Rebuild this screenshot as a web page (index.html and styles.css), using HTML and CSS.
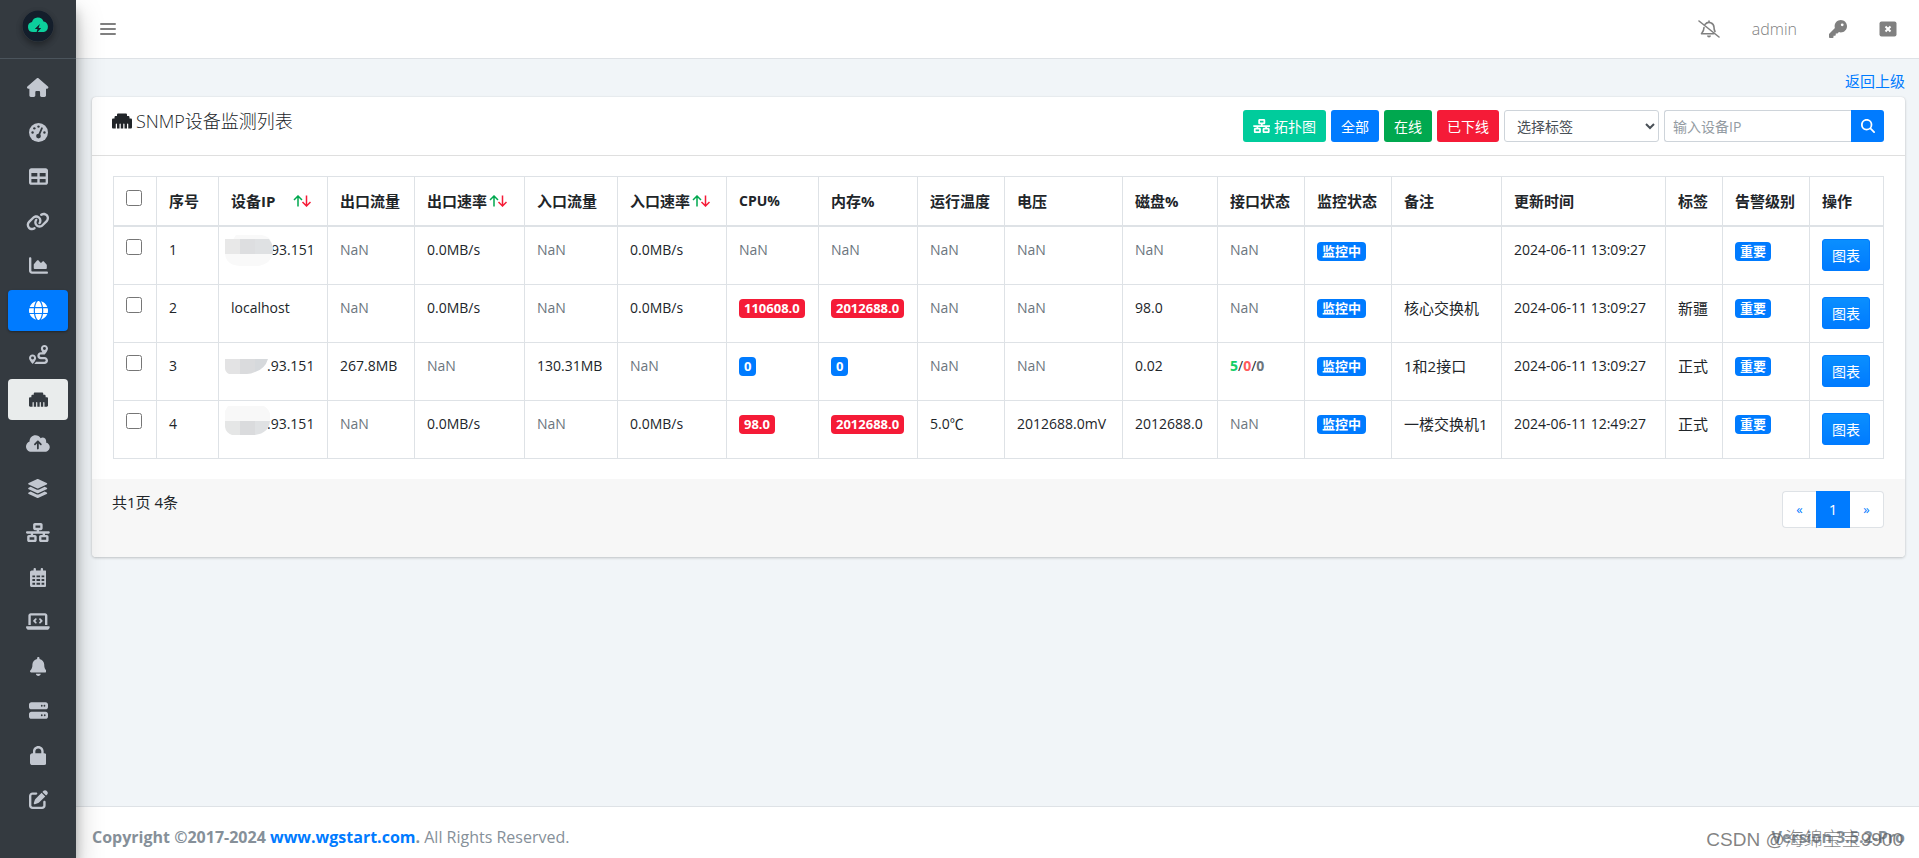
FILE: index.html
```html
<!DOCTYPE html>
<html lang="zh-CN">
<head>
<meta charset="utf-8">
<meta name="viewport" content="width=device-width, initial-scale=1">
<title>SNMP设备监测列表</title>
<link rel="stylesheet" href="styles.css">
</head>
<body class="layout">
<aside class="sidebar">
  <a class="brand" href="#" aria-label="首页">
    <svg viewBox="0 0 32 32" class="brand-logo"><circle cx="16" cy="16" r="15.500" fill="#141e2b"/><path fill="#0ccf9c" d="M11 22a5 5 0 0 1-1-9.900 6 6 0 0 1 11.500-.6 5.400 5.400 0 0 1 .5 10.500z"/><path fill="#141e2b" d="M17.800 14l-5 5h2.700l-1.300 4.500 5-5.500h-2.600z"/></svg>
  </a>
  <nav aria-label="主菜单">
    <ul class="menu">
      <li><a href="#" aria-label="主页"><svg viewBox="0 0 576 512"><path d="M575.800 255.500c0 18-15 32.100-32 32.100h-32l.7 160.200c0 2.700-.2 5.400-.5 8.100V472c0 22.100-17.900 40-40 40H392c-22.100 0-40-17.900-40-40v-88c0-17.700-14.300-32-32-32h-64c-17.700 0-32 14.300-32 32v88c0 22.100-17.900 40-40 40h-80c-22.100 0-40-17.900-40-40V287.600H32c-18 0-32-14-32-32.100 0-9 3-17 10-24L266.400 8c7-7 15-8 22-8s15 2 21 7l255.400 224.500c8 7 12 15 11 24z"/></svg></a></li>
      <li><a href="#" aria-label="仪表盘"><svg viewBox="0 0 512 512"><circle cx="256" cy="256" r="256"/><g class="cut"><circle cx="256" cy="96" r="32"/><circle cx="144" cy="144" r="32"/><circle cx="96" cy="256" r="32"/><circle cx="416" cy="256" r="32"/><circle cx="256" cy="352" r="64"/><path d="M234 345l93-214c5-13 19-18 31-13s18 19 13 31l-93 213z"/></g></svg></a></li>
      <li><a href="#" aria-label="表格"><svg viewBox="0 0 512 512"><path d="M64 256V160H224v96H64zm0 64H224v96H64V320zm224 96V320H448v96H288zM448 256H288V160H448v96zM64 32C28.700 32 0 60.700 0 96V416c0 35.300 28.700 64 64 64H448c35.300 0 64-28.700 64-64V96c0-35.300-28.700-64-64-64H64z"/></svg></a></li>
      <li><a href="#" aria-label="链接"><svg viewBox="0 0 640 512"><path d="M579.800 267.700c56.500-56.500 56.500-148 0-204.500c-50-50-128.800-56.500-186.300-15.400l-1.600 1.100c-14.400 10.300-17.700 30.300-7.400 44.600s30.300 17.700 44.600 7.400l1.600-1.100c32.100-22.900 76-19.300 103.800 8.600c31.500 31.500 31.500 82.500 0 114L422.300 334.800c-31.500 31.500-82.500 31.500-114 0c-27.900-27.900-31.500-71.800-8.600-103.800l1.100-1.600c10.300-14.400 6.900-34.400-7.400-44.600s-34.400-6.900-44.600 7.400l-1.100 1.600C206.500 251.200 213 330 263 380c56.500 56.500 148 56.500 204.500 0L579.800 267.700zM60.200 244.300c-56.500 56.500-56.500 148 0 204.500c50 50 128.800 56.500 186.300 15.400l1.600-1.100c14.400-10.300 17.700-30.300 7.400-44.600s-30.300-17.700-44.600-7.400l-1.600 1.100c-32.100 22.900-76 19.300-103.800-8.600C74 372 74 321 105.500 289.500L217.700 177.200c31.500-31.500 82.500-31.500 114 0c27.900 27.900 31.500 71.800 8.600 103.900l-1.100 1.600c-10.300 14.400-6.900 34.400 7.400 44.600s34.400 6.900 44.600-7.400l1.100-1.600C433.500 260.800 427 182 377 132c-56.500-56.500-148-56.500-204.500 0L60.200 244.300z"/></svg></a></li>
      <li><a href="#" aria-label="图表"><svg viewBox="0 0 512 512"><path d="M64 64c0-17.700-14.300-32-32-32S0 46.300 0 64V400c0 44.200 35.800 80 80 80H480c17.700 0 32-14.300 32-32s-14.300-32-32-32H80c-8.800 0-16-7.200-16-16V64zm96 288H448c17.700 0 32-14.300 32-32V251.800c0-7.600-2.700-15-7.700-20.800l-65.800-76.800c-12.100-14.200-33.700-15-46.900-1.800l-21 21c-10 10-26.400 9.200-35.400-1.600l-39.200-47c-12.600-15.100-35.700-15.400-48.700-.6L135.900 215c-5.100 5.800-7.900 13.300-7.900 21.100v84c0 17.700 14.300 32 32 32z"/></svg></a></li>
      <li><a href="#" class="open" aria-label="网络"><svg viewBox="0 0 512 512"><path d="M352 256c0 22.200-1.200 43.600-3.300 64H163.300c-2.200-20.400-3.300-41.800-3.300-64s1.200-43.600 3.300-64H348.700c2.200 20.400 3.300 41.800 3.300 64zm28.800-64H503.900c5.300 20.500 8.100 41.900 8.100 64s-2.800 43.500-8.100 64H380.800c2.100-20.600 3.200-42 3.200-64s-1.100-43.400-3.200-64zm112.600-32H376.700c-10-63.900-29.800-117.400-55.300-151.600c78.300 20.700 142 77.500 171.900 151.600zm-149.100 0H167.700c6.100-36.400 15.500-68.600 27-94.700c10.500-23.600 22.200-40.700 33.500-51.500C239.400 3.200 248.700 0 256 0s16.600 3.200 27.800 13.800c11.300 10.800 23 27.900 33.500 51.500c11.600 26 20.900 58.200 27 94.700zm-209 0H18.600C48.600 85.900 112.200 29.100 190.600 8.400C165.100 42.600 145.300 96.100 135.300 160zM8.100 192H131.200c-2.100 20.600-3.200 42-3.200 64s1.100 43.400 3.200 64H8.100C2.800 299.500 0 278.100 0 256s2.800-43.500 8.100-64zM194.700 446.600c-11.600-26-20.900-58.200-27-94.600H344.300c-6.100 36.400-15.500 68.600-27 94.600c-10.500 23.600-22.200 40.700-33.500 51.500C272.600 508.800 263.300 512 256 512s-16.600-3.200-27.800-13.800c-11.300-10.800-23-27.900-33.500-51.500zM135.300 352c10 63.900 29.800 117.400 55.300 151.600C112.200 482.900 48.600 426.100 18.600 352H135.300zm358.100 0c-30 74.100-93.600 130.900-171.900 151.600c25.500-34.200 45.200-87.700 55.300-151.600H493.400z"/></svg></a></li>
      <li><a href="#" aria-label="路由"><svg viewBox="0 0 512 512"><path fill-rule="evenodd" d="M512 96c0 50.200-59.100 125.100-84.600 155c-3.800 4.400-9.400 6.100-14.500 5H320c-17.700 0-32 14.300-32 32s14.300 32 32 32h96c53 0 96 43 96 96s-43 96-96 96H139.600c8.700-9.900 19.300-22.600 30-36.800c6.300-8.400 12.800-17.600 19-27.200H416c17.700 0 32-14.300 32-32s-14.300-32-32-32H320c-53 0-96-43-96-96s43-96 96-96h39.800c-21-31.500-39.800-67.700-39.800-96c0-53 43-96 96-96s96 43 96 96zM117.100 489.100c-3.800 4.300-7.200 8.100-10.100 11.300l-1.800 2-.2-.2c-6 4.600-14.600 4-20-1.800C59.800 473 0 402.500 0 352c0-53 43-96 96-96s96 43 96 96c0 30-21.100 67-43.500 97.900c-10.700 14.700-21.700 28-30.800 38.500l-.6 .7zM136 352a40 40 0 1 0 -80 0 40 40 0 1 0 80 0zM416 136a40 40 0 1 0 0-80 40 40 0 1 0 0 80z"/></svg></a></li>
      <li><a href="#" class="current" aria-label="SNMP设备监测" aria-current="page"><svg viewBox="0 0 512 512"><path d="M0 224V416c0 17.700 14.300 32 32 32H96V336c0-8.800 7.200-16 16-16s16 7.200 16 16V448h64V336c0-8.800 7.200-16 16-16s16 7.200 16 16V448h64V336c0-8.800 7.200-16 16-16s16 7.200 16 16V448h64V336c0-8.800 7.200-16 16-16s16 7.200 16 16V448h64c17.700 0 32-14.300 32-32V224c0-17.700-14.300-32-32-32H448V160c0-17.700-14.300-32-32-32H384V96c0-17.700-14.300-32-32-32H160c-17.700 0-32 14.300-32 32v32H96c-17.700 0-32 14.300-32 32v32H32c-17.700 0-32 14.300-32 32z"/></svg></a></li>
      <li><a href="#" aria-label="上传"><svg viewBox="0 0 640 512"><path d="M144 480C64.500 480 0 415.500 0 336c0-62.800 40.200-116.200 96.200-135.900c-.1-2.700-.2-5.400-.2-8.100c0-88.400 71.600-160 160-160c59.300 0 111 32.200 138.700 80.200C409.900 102 428.300 96 448 96c53 0 96 43 96 96c0 12.200-2.300 23.800-6.400 34.600C596 238.400 640 290.100 640 352c0 70.700-57.300 128-128 128H144zm79-217c-9.400 9.400-9.400 24.600 0 33.900s24.600 9.400 33.900 0l39-39V392c0 13.300 10.700 24 24 24s24-10.700 24-24V257.900l39 39c9.400 9.400 24.600 9.400 33.900 0s9.400-24.600 0-33.900l-80-80c-9.400-9.400-24.600-9.400-33.900 0l-80 80z"/></svg></a></li>
      <li><a href="#" aria-label="分组"><svg viewBox="0 0 576 512"><path d="M264.500 5.200c14.900-6.900 32.100-6.900 47 0l218.600 101c8.500 3.900 13.900 12.400 13.900 21.800s-5.400 17.900-13.900 21.800l-218.600 101c-14.900 6.900-32.100 6.900-47 0L45.900 149.800C37.400 145.800 32 137.300 32 128s5.400-17.900 13.900-21.800L264.500 5.200zM476.900 209.600l53.200 24.600c8.500 3.900 13.900 12.400 13.900 21.800s-5.400 17.900-13.900 21.800l-218.600 101c-14.900 6.900-32.100 6.900-47 0L45.900 277.800C37.400 273.800 32 265.300 32 256s5.400-17.900 13.900-21.800l53.200-24.600 152 70.200c23.400 10.800 50.400 10.800 73.800 0l152-70.200zm-152 198.200l152-70.200 53.200 24.600c8.500 3.900 13.900 12.400 13.900 21.800s-5.400 17.900-13.900 21.800l-218.600 101c-14.900 6.900-32.100 6.900-47 0L45.900 405.800C37.400 401.800 32 393.300 32 384s5.400-17.900 13.900-21.800l53.200-24.600 152 70.200c23.400 10.800 50.400 10.800 73.800 0z"/></svg></a></li>
      <li><a href="#" aria-label="拓扑"><svg viewBox="0 0 640 512"><path d="M256 64H384v64H256V64zM240 0c-26.500 0-48 21.500-48 48v96c0 26.500 21.500 48 48 48h48v32H32c-17.700 0-32 14.300-32 32s14.300 32 32 32h96v32H80c-26.500 0-48 21.500-48 48v96c0 26.500 21.500 48 48 48H240c26.500 0 48-21.500 48-48V368c0-26.500-21.500-48-48-48H192V288H448v32H400c-26.500 0-48 21.500-48 48v96c0 26.500 21.500 48 48 48H560c26.500 0 48-21.500 48-48V368c0-26.500-21.500-48-48-48H512V288h96c17.700 0 32-14.300 32-32s-14.300-32-32-32H352V192h48c26.500 0 48-21.500 48-48V48c0-26.500-21.500-48-48-48H240zM96 448V384H224v64H96zm320-64H544v64H416V384z"/></svg></a></li>
      <li><a href="#" aria-label="日历"><svg viewBox="0 0 448 512"><path fill-rule="evenodd" d="M128 0c18 0 32 14 32 32v32h128V32c0-18 14-32 32-32s32 14 32 32v32h48c27 0 48 21 48 48v352c0 27-21 48-48 48H48c-27 0-48-21-48-48V112c0-27 21-48 48-48h48V32c0-18 14-32 32-32zM64 200v48h72v-48zm112 0v48h96v-48zm136 0v48h72v-48zM64 296v56h72v-56zm112 0v56h96v-56zm136 0v56h72v-56zM64 400v48h72v-48zm112 0v48h96v-48zm136 0v48h72v-48z"/></svg></a></li>
      <li><a href="#" aria-label="终端"><svg viewBox="0 0 640 512"><path d="M64 96c0-35.300 28.700-64 64-64H512c35.300 0 64 28.700 64 64V352H512V96H128V352H64V96zM0 403.200C0 392.600 8.600 384 19.200 384H620.800c10.600 0 19.200 8.600 19.200 19.200c0 42.400-34.400 76.800-76.800 76.800H76.800C34.400 480 0 445.600 0 403.200zM281 209l-31 31 31 31c9.400 9.400 9.400 24.600 0 33.900s-24.600 9.400-33.900 0l-48-48c-9.400-9.400-9.400-24.600 0-33.900l48-48c9.400-9.400 24.600-9.400 33.900 0s9.400 24.600 0 33.900zM393 175l48 48c9.400 9.400 9.400 24.600 0 33.900l-48 48c-9.400 9.400-24.600 9.400-33.900 0s-9.400-24.600 0-33.900l31-31-31-31c-9.400-9.400-9.400-24.600 0-33.900s24.600-9.400 33.900 0z"/></svg></a></li>
      <li><a href="#" aria-label="告警"><svg viewBox="0 0 448 512"><path d="M224 0c-17.700 0-32 14.300-32 32V51.200C119 66 64 130.600 64 208v18.800c0 47-17.300 92.400-48.500 127.600l-7.400 8.300c-8.400 9.400-10.400 22.900-5.300 34.400S19.400 416 32 416H416c12.600 0 24-7.400 29.200-18.900s3.100-25-5.300-34.400l-7.400-8.300C401.300 319.200 384 273.900 384 226.800V208c0-77.400-55-142-128-156.800V32c0-17.700-14.300-32-32-32zm45.300 493.300c12-12 18.700-28.300 18.700-45.300H160c0 17 6.700 33.300 18.700 45.300s28.300 18.700 45.300 18.700s33.300-6.700 45.300-18.700z"/></svg></a></li>
      <li><a href="#" aria-label="主机"><svg viewBox="0 0 512 512"><path d="M64 32C28.700 32 0 60.700 0 96v64c0 35.300 28.700 64 64 64H448c35.300 0 64-28.700 64-64V96c0-35.300-28.700-64-64-64H64zm280 72a24 24 0 1 1 0 48 24 24 0 1 1 0-48zm48 24a24 24 0 1 1 48 0 24 24 0 1 1 -48 0zM64 288c-35.300 0-64 28.700-64 64v64c0 35.300 28.700 64 64 64H448c35.300 0 64-28.700 64-64V352c0-35.300-28.700-64-64-64H64zm280 72a24 24 0 1 1 0 48 24 24 0 1 1 0-48zm56 24a24 24 0 1 1 48 0 24 24 0 1 1 -48 0z"/></svg></a></li>
      <li><a href="#" aria-label="安全"><svg viewBox="0 0 448 512"><path d="M144 144v48H304V144c0-44.200-35.800-80-80-80s-80 35.800-80 80zM80 192V144C80 64.500 144.500 0 224 0s144 64.500 144 144v48h16c35.300 0 64 28.700 64 64V448c0 35.300-28.700 64-64 64H64c-35.300 0-64-28.700-64-64V256c0-35.300 28.700-64 64-64H80z"/></svg></a></li>
      <li><a href="#" aria-label="编辑"><svg viewBox="0 0 512 512"><path d="M471.600 21.700c-21.900-21.900-57.300-21.900-79.200 0L362.300 51.700l97.900 97.900 30.100-30.100c21.900-21.900 21.900-57.300 0-79.200L471.600 21.700zm-299.200 220c-6.100 6.100-10.800 13.600-13.500 21.900l-29.600 88.800c-2.900 8.600-.6 18.100 5.800 24.600s15.900 8.700 24.600 5.800l88.800-29.600c8.200-2.700 15.700-7.400 21.900-13.500L437.700 172.300 339.700 74.300 172.400 241.700zM96 64C43 64 0 107 0 160V416c0 53 43 96 96 96H352c53 0 96-43 96-96V320c0-17.700-14.300-32-32-32s-32 14.300-32 32v96c0 17.700-14.300 32-32 32H96c-17.700 0-32-14.300-32-32V160c0-17.700 14.300-32 32-32h96c17.700 0 32-14.300 32-32s-14.300-32-32-32H96z"/></svg></a></li>
    </ul>
  </nav>
</aside>

<div class="page">
  <header class="topbar">
    <button class="icon-btn" type="button" aria-label="折叠菜单"><svg class="bars" viewBox="0 0 16 14"><path d="M1 2h14M1 7h14M1 12h14" fill="none" stroke="currentColor" stroke-width="2" stroke-linecap="round"/></svg></button>
    <div class="topbar-tools">
      <button class="icon-btn" type="button" aria-label="关闭告警声音"><svg class="tool-wide" viewBox="0 0 22 18"><g fill="none" stroke="currentColor" stroke-width="1.600" stroke-linecap="round" stroke-linejoin="round"><path d="M1 1l20 16M11 1v1.500M7.200 4.200A5 5 0 0 1 16 7.300c0 2 .4 3.200 1 4.200M6 7.500c0 3-1 4.500-2.500 6.200h12"/></g><path fill="currentColor" d="M9 15.500h4a2 2 0 0 1-4 0z"/></svg></button>
      <a class="user" href="#">admin</a>
      <button class="icon-btn" type="button" aria-label="修改密码"><svg class="tool" viewBox="0 0 512 512"><path fill="currentColor" d="M336 352c97.200 0 176-78.800 176-176S433.200 0 336 0S160 78.800 160 176c0 18.700 2.900 36.800 8.300 53.700L7 391c-4.500 4.500-7 10.600-7 17v80c0 13.300 10.700 24 24 24h80c13.300 0 24-10.700 24-24V448h40c13.300 0 24-10.700 24-24V384h40c6.400 0 12.500-2.500 17-7l33.300-33.300c16.900 5.400 35 8.300 53.700 8.300zM376 96a40 40 0 1 1 0 80 40 40 0 1 1 0-80z"/></svg></button>
      <button class="icon-btn" type="button" aria-label="退出"><svg class="tool" viewBox="0 0 18 18"><rect x="0.500" y="1.500" width="17" height="15" rx="2" fill="currentColor"/><path d="M6.500 6.500l5 5M11.500 6.500l-5 5" stroke="#fff" stroke-width="2"/></svg></button>
    </div>
  </header>

  <main class="content">
    <a class="back" href="#">返回上级</a>
    <section class="card">
      <div class="card-header">
        <h1 class="card-title"><svg viewBox="0 0 512 512"><path d="M0 224V416c0 17.700 14.300 32 32 32H96V336c0-8.800 7.200-16 16-16s16 7.200 16 16V448h64V336c0-8.800 7.200-16 16-16s16 7.200 16 16V448h64V336c0-8.800 7.200-16 16-16s16 7.200 16 16V448h64V336c0-8.800 7.200-16 16-16s16 7.200 16 16V448h64c17.700 0 32-14.300 32-32V224c0-17.700-14.300-32-32-32H448V160c0-17.700-14.300-32-32-32H384V96c0-17.700-14.300-32-32-32H160c-17.700 0-32 14.300-32 32v32H96c-17.700 0-32 14.300-32 32v32H32c-17.700 0-32 14.300-32 32z"/></svg>SNMP设备监测列表</h1>
        <form class="filters">
          <button class="btn teal" type="button"><svg viewBox="0 0 640 512"><path d="M256 64H384v64H256V64zM240 0c-26.500 0-48 21.500-48 48v96c0 26.500 21.500 48 48 48h48v32H32c-17.700 0-32 14.300-32 32s14.300 32 32 32h96v32H80c-26.500 0-48 21.500-48 48v96c0 26.500 21.500 48 48 48H240c26.500 0 48-21.500 48-48V368c0-26.500-21.500-48-48-48H192V288H448v32H400c-26.500 0-48 21.500-48 48v96c0 26.500 21.500 48 48 48H560c26.500 0 48-21.500 48-48V368c0-26.500-21.500-48-48-48H512V288h96c17.700 0 32-14.300 32-32s-14.300-32-32-32H352V192h48c26.500 0 48-21.500 48-48V48c0-26.500-21.500-48-48-48H240zM96 448V384H224v64H96zm320-64H544v64H416V384z"/></svg>拓扑图</button>
          <button class="btn blue" type="button">全部</button>
          <button class="btn green" type="button">在线</button>
          <button class="btn red" type="button">已下线</button>
          <select class="tag-select" aria-label="选择标签"><option>选择标签</option></select>
          <div class="search">
            <input type="text" placeholder="输入设备IP" aria-label="输入设备IP">
            <button type="submit" aria-label="搜索"><svg viewBox="0 0 512 512"><path d="M416 208c0 45.900-14.900 88.300-40 122.700L502.600 457.400c12.500 12.500 12.500 32.800 0 45.300s-32.800 12.500-45.300 0L330.700 376c-34.400 25.200-76.800 40-122.700 40C93.100 416 0 322.900 0 208S93.100 0 208 0S416 93.100 416 208zM208 352a144 144 0 1 0 0-288 144 144 0 1 0 0 288z"/></svg></button>
          </div>
        </form>
      </div>
      <div class="card-body">
        <table class="devices">
          <colgroup><col class="w-check"><col class="w-no"><col class="w-ip"><col class="w-std"><col class="w-rate"><col class="w-in"><col class="w-ip"><col class="w-cpu"><col class="w-mem"><col class="w-std"><col class="w-volt"><col class="w-disk"><col class="w-std"><col class="w-std"><col class="w-rate"><col class="w-time"><col class="w-tag"><col class="w-std"><col class="w-act"></colgroup>
          <thead>
            <tr><th><input type="checkbox" aria-label="全选"></th><th>序号</th><th>设备IP<svg class="sort spaced" viewBox="0 0 18 12"><path class="up" d="M5 11.500V1M1 5l4-4 4 4"/><path class="down" d="M13.500.5V11M9.500 7l4 4 4-4"/></svg></th><th>出口流量</th><th>出口速率<svg class="sort" viewBox="0 0 18 12"><path class="up" d="M5 11.500V1M1 5l4-4 4 4"/><path class="down" d="M13.500.5V11M9.500 7l4 4 4-4"/></svg></th><th>入口流量</th><th>入口速率<svg class="sort" viewBox="0 0 18 12"><path class="up" d="M5 11.500V1M1 5l4-4 4 4"/><path class="down" d="M13.500.5V11M9.500 7l4 4 4-4"/></svg></th><th class="latin">CPU%</th><th>内存%</th><th>运行温度</th><th>电压</th><th>磁盘%</th><th>接口状态</th><th>监控状态</th><th>备注</th><th>更新时间</th><th>标签</th><th>告警级别</th><th>操作</th></tr>
          </thead>
          <tbody>
            <tr><td><input type="checkbox" aria-label="选择 1"></td><td>1</td><td><span class="masked"><svg viewBox="0 0 50 34"><path fill="#f9f9f9" d="M12 1h26q11 2 11 15t-14 16H16Q1 31 1 18z"/><path fill="#e8e8e8" d="M1 5h15v15H1z"/><path fill="#dddee0" d="M16 5h15v15H16z"/><path fill="#dfe1e3" d="M31 5h14q5 7 4 15H31z"/></svg></span>93.151</td><td class="nan">NaN</td><td>0.0MB/s</td><td class="nan">NaN</td><td>0.0MB/s</td><td class="nan">NaN</td><td class="nan">NaN</td><td class="nan">NaN</td><td class="nan">NaN</td><td class="nan">NaN</td><td class="nan">NaN</td><td><span class="badge">监控中</span></td><td></td><td>2024-06-11 13:09:27</td><td></td><td><span class="badge">重要</span></td><td><button class="chart-btn" type="button">图表</button></td></tr>
            <tr><td><input type="checkbox" aria-label="选择 2"></td><td>2</td><td>localhost</td><td class="nan">NaN</td><td>0.0MB/s</td><td class="nan">NaN</td><td>0.0MB/s</td><td><span class="badge danger">110608.0</span></td><td><span class="badge danger">2012688.0</span></td><td class="nan">NaN</td><td class="nan">NaN</td><td>98.0</td><td class="nan">NaN</td><td><span class="badge">监控中</span></td><td class="cjk">核心交换机</td><td>2024-06-11 13:09:27</td><td class="cjk">新疆</td><td><span class="badge">重要</span></td><td><button class="chart-btn" type="button">图表</button></td></tr>
            <tr><td><input type="checkbox" aria-label="选择 3"></td><td>3</td><td><span class="masked short low"><svg viewBox="0 0 50 34"><path fill="#e3e3e4" d="M1 5h15v15H5q-4-2-4-6z"/><path fill="#dadbdd" d="M16 5h15v13q-4 2-8 2h-7z"/><path fill="#d6d9dc" d="M31 5h13q-3 10-13 13z"/></svg></span>.93.151</td><td>267.8MB</td><td class="nan">NaN</td><td>130.31MB</td><td class="nan">NaN</td><td><span class="badge">0</span></td><td><span class="badge">0</span></td><td class="nan">NaN</td><td class="nan">NaN</td><td>0.02</td><td><b class="ok">5</b>/<b class="bad">0</b>/<b class="idle">0</b></td><td><span class="badge">监控中</span></td><td class="cjk">1和2接口</td><td>2024-06-11 13:09:27</td><td class="cjk">正式</td><td><span class="badge">重要</span></td><td><button class="chart-btn" type="button">图表</button></td></tr>
            <tr><td><input type="checkbox" aria-label="选择 4"></td><td>4</td><td><span class="masked short high"><svg viewBox="0 0 50 34"><path fill="#f8f8f8" d="M4 1h36q6 4 6 9v6H1V6z"/><path fill="#e5e6e6" d="M1 16h15v14h-8q-6-2-7-8z"/><path fill="#dadbdd" d="M16 16h15v14H16z"/><path fill="#dfe1e3" d="M31 16h15q-1 12-15 14z"/></svg></span>.93.151</td><td class="nan">NaN</td><td>0.0MB/s</td><td class="nan">NaN</td><td>0.0MB/s</td><td><span class="badge danger">98.0</span></td><td><span class="badge danger">2012688.0</span></td><td>5.0℃</td><td>2012688.0mV</td><td>2012688.0</td><td class="nan">NaN</td><td><span class="badge">监控中</span></td><td class="cjk">一楼交换机1</td><td>2024-06-11 12:49:27</td><td class="cjk">正式</td><td><span class="badge">重要</span></td><td><button class="chart-btn" type="button">图表</button></td></tr>
          </tbody>
        </table>
      </div>
      <div class="card-footer">
        <span>共1页 4条</span>
        <nav class="pager" aria-label="分页"><a href="#" class="step" aria-label="上一页">«</a><a href="#" class="active" aria-current="page">1</a><a href="#" class="step" aria-label="下一页">»</a></nav>
      </div>
    </section>
  </main>

  <footer class="footer">
    <span><strong>Copyright ©2017-2024 <a href="#">www.wgstart.com</a>.</strong> All Rights Reserved.</span>
    <strong>Version 3.5.2-Pro</strong>
    <span class="watermark">CSDN @海绵宝宝9900</span>
  </footer>
</div>
</body>
</html>
```

FILE: styles.css
```css
*, *::before, *::after { box-sizing: border-box; }

.layout {
  margin: 0;
  display: flex;
  min-height: 100vh;
  background: #f1f5f8;
  color: #212529;
  font: 15px/22px "Open Sans", "Noto Sans CJK SC", sans-serif;
}

a { color: #007bff; text-decoration: none; }
button, input, select { font-family: inherit; }
button { cursor: pointer; }
svg { display: block; }

/* Sidebar */
.sidebar {
  flex: 0 0 76px;
  position: relative;
  z-index: 2;
  background: #343a40;
  box-shadow: 0 14px 28px rgba(0, 0, 0, .25), 0 10px 10px rgba(0, 0, 0, .22);
}
.brand {
  display: flex;
  justify-content: center;
  height: 59px;
  padding-top: 10px;
  border-bottom: 1px solid #4b545c;
}
.brand-logo {
  width: 32px;
  height: 32px;
  border-radius: 50%;
  box-shadow: 0 3px 6px rgba(0, 0, 0, .16), 0 3px 6px rgba(0, 0, 0, .23);
}
.menu { list-style: none; margin: 0; padding: 8px; }
.menu li { margin-bottom: 4px; }
.menu li:nth-child(even) { margin-bottom: 3px; }
.menu a {
  display: flex;
  align-items: center;
  justify-content: center;
  height: 41px;
  border-radius: 4px;
  color: #c2c7d0;
}
.menu svg { height: 19px; fill: currentColor; }
.menu .cut { fill: #343a40; }
.menu .open {
  background: #007bff;
  color: #fff;
  box-shadow: 0 1px 3px rgba(0, 0, 0, .12), 0 1px 2px rgba(0, 0, 0, .24);
}
.menu .current { background: #e9ecec; color: #343a40; }

/* Page frame */
.page { flex: 1; min-width: 0; display: flex; flex-direction: column; }
.topbar {
  display: flex;
  align-items: center;
  justify-content: space-between;
  height: 59px;
  padding: 0 22px 0 24px;
  background: #fff;
  border-bottom: 1px solid #dee2e6;
}
.icon-btn { padding: 0; border: 0; background: none; color: #808080; }
.bars { width: 16px; height: 14px; }
.topbar-tools { display: flex; align-items: center; gap: 32px; }
.tool { width: 18px; height: 18px; }
.tool-wide { width: 22px; height: 18px; }
.user { color: #808080; font-size: 16px; font-weight: 300; }

.content { flex: 1; padding: 11px 14px 20px 16px; }
.back { display: block; width: fit-content; margin: 0 0 5px auto; }

/* Card */
.card {
  background: #fff;
  border-radius: 4px;
  box-shadow: 0 0 1px rgba(0, 0, 0, .125), 0 1px 3px rgba(0, 0, 0, .2);
}
.card-header {
  display: flex;
  justify-content: space-between;
  padding: 13px 21px 13px 20px;
  border-bottom: 1px solid #dfdfdf;
}
.card-title {
  display: flex;
  align-items: center;
  gap: 4px;
  height: 22px;
  margin: 0;
  font-size: 18px;
  font-weight: 300;
}
.card-title svg { height: 20px; fill: #212529; }
.filters { display: flex; gap: 5px; }
.btn {
  display: flex;
  align-items: center;
  gap: 4px;
  height: 32px;
  padding: 0 10px;
  border: 0;
  border-radius: 3px;
  color: #fff;
  font-size: 14px;
}
.btn svg { height: 14px; fill: #fff; }
.teal { background: #00cc9c; }
.blue { background: #007bff; }
.green { background: #00a84f; }
.red { background: #f51b37; }
.tag-select {
  width: 155px;
  height: 32px;
  padding: 0 8px;
  border: 1px solid #ced4da;
  border-radius: 3px;
  background: #fff;
  color: #495057;
  font-size: 14px;
}
.search { display: flex; }
.search input {
  width: 187px;
  height: 32px;
  padding: 0 8px;
  border: 1px solid #ced4da;
  border-right: 0;
  border-radius: 3px 0 0 3px;
  color: #495057;
  font-size: 14px;
}
.search input::placeholder { color: #939ba2; }
.search button {
  display: grid;
  place-items: center;
  width: 33px;
  padding: 0;
  border: 0;
  border-radius: 0 3px 3px 0;
  background: #007bff;
}
.search svg { height: 14px; fill: #fff; }

/* Device table */
.card-body { padding: 20px 21px; }
.devices { width: 100%; table-layout: fixed; border-collapse: collapse; }
.devices th, .devices td {
  padding: 12px;
  border: 1px solid #dee2e6;
  text-align: left;
  vertical-align: top;
  white-space: nowrap;
}
.devices th { height: 49px; border-bottom-width: 2px; font-weight: 700; line-height: 24px; }
.devices td { height: 58px; padding-top: 11px; font-size: 14px; line-height: 24px; }
.devices td.cjk { font-size: 15px; }
.devices td.nan { color: #6c757d; }
.devices th.latin { font-size: 14px; }
.devices input { display: block; width: 16px; height: 16px; margin: 1px 0 0; }
.w-check { width: 43px; }
.w-no { width: 62px; }
.w-ip { width: 109px; }
.w-std { width: 87px; }
.w-rate { width: 110px; }
.w-in { width: 93px; }
.w-cpu { width: 92px; }
.w-mem { width: 99px; }
.w-volt { width: 118px; }
.w-disk { width: 95px; }
.w-time { width: 164px; }
.w-tag { width: 57px; }
.w-act { width: 74px; }
.sort {
  display: inline-block;
  width: 18px;
  height: 12px;
  margin-left: 2px;
  fill: none;
  stroke-width: 1.5;
}
.spaced { margin-left: 18px; }
.up { stroke: #00a84f; }
.down { stroke: #f51b37; }

.masked { position: relative; display: inline-block; width: 40px; height: 12px; }
.masked.short { width: 36px; }
.masked svg { position: absolute; left: -7px; top: -9px; width: 50px; height: 34px; }
.masked.high svg { top: -12px; }
.masked.low svg { top: -5px; }

.badge {
  display: inline-block;
  padding: 2px 5px 3px;
  border-radius: 4px;
  background: #007bff;
  color: #fff;
  font-size: 13px;
  font-weight: 700;
  line-height: 14px;
  vertical-align: middle;
}
.badge.danger { background: #f51b37; }
.ok { color: #13ce66; }
.bad { color: #ff5b5b; }
.idle { color: #6c757d; }
.chart-btn {
  display: block;
  height: 32px;
  margin-top: 1px;
  padding: 0 9px;
  border: 1px solid #007bff;
  border-radius: 3px;
  background: linear-gradient(#0a8fff, #007bff);
  color: #fff;
  font-size: 14px;
}

.card-footer {
  display: flex;
  justify-content: space-between;
  align-items: flex-start;
  padding: 12px 21px 29px 20px;
  border-radius: 0 0 4px 4px;
  background: #f7f7f7;
}
.pager { display: flex; }
.pager a {
  width: 34px;
  height: 37px;
  border: 1px solid #dee2e6;
  background: #fff;
  line-height: 35px;
  text-align: center;
}
.pager a:first-child { border-right: 0; border-radius: 4px 0 0 4px; }
.pager a:last-child { border-left: 0; border-radius: 0 4px 4px 0; }
.pager .step { font-size: 13px; }
.pager .active { border-color: #007bff; background: #007bff; color: #fff; }

/* Footer */
.footer {
  position: relative;
  display: flex;
  justify-content: space-between;
  padding: 18px 14px 9px 16px;
  border-top: 1px solid #dee2e6;
  background: #fff;
  color: #869099;
  font-size: 16px;
  line-height: 24px;
}
.watermark {
  position: absolute;
  right: 16px;
  bottom: 6px;
  color: rgba(90, 90, 90, .75);
  font: 300 19px/24px "Liberation Sans", "Noto Sans CJK SC", sans-serif;
}
```
